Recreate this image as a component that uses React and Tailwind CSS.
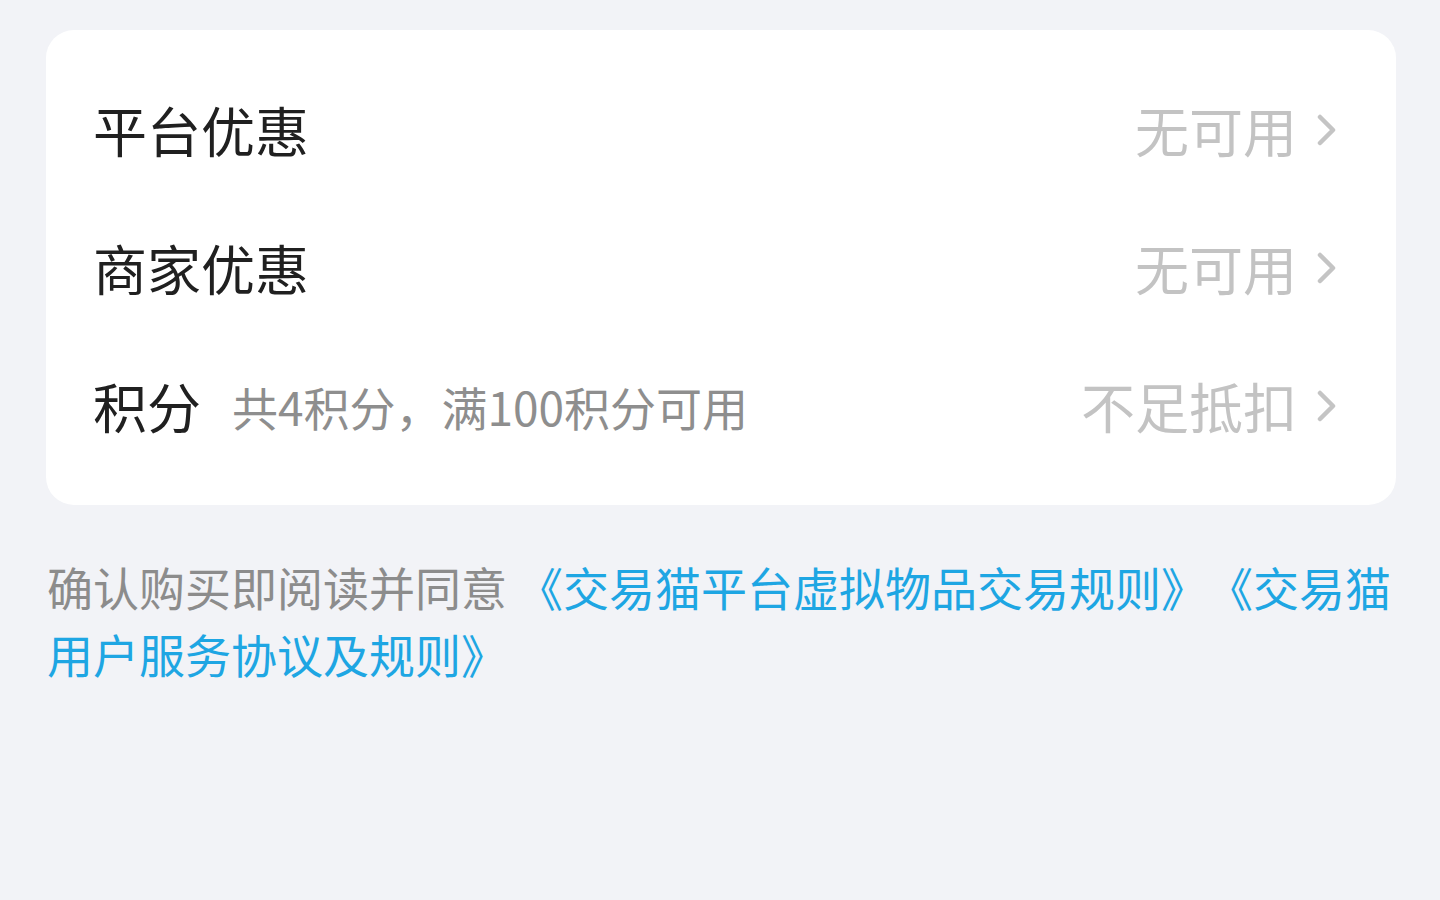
import React from "react";

const Chevron = () => (
  <svg width="22" height="32" viewBox="0 0 22 32" className="shrink-0">
    <path d="M4 3 L17 16 L4 29" fill="none" stroke="#c4c4c4" strokeWidth="4.5" strokeLinecap="round" strokeLinejoin="round" />
  </svg>
);

const Row = ({ label, sub, value }) => (
  <div className="flex items-center h-[138px]">
    <div className="text-[54px] text-[#202020] leading-none">{label}</div>
    {sub && <div className="ml-[31px] text-[46px] text-[#8e8e8e] leading-none">{sub}</div>}
    <div className="ml-auto flex items-center gap-[19px]">
      <div className="text-[54px] text-[#c3c3c3] leading-none">{value}</div>
      <Chevron />
    </div>
  </div>
);

export default function App() {
  return (
    <div
      className="w-[1440px] h-[900px] bg-[#f2f3f7] pt-[30px] pl-[46px] pr-[44px]"
      style={{ fontFamily: '"Noto Sans CJK SC", "Noto Sans", sans-serif' }}
    >
      <div className="bg-white rounded-[28px] pl-[47px] pr-[58px] pt-[31px] pb-[30px]">
        <Row label="平台优惠" value="无可用" />
        <Row label="商家优惠" value="无可用" />
        <Row label="积分" sub="共4积分，满100积分可用" value="不足抵扣" />
      </div>
      <div className="mt-[48px] pl-[1px] text-[46px] leading-[67px] text-[#8c8c8c] [text-spacing-trim:space-all]">
        确认购买即阅读并同意
        <span className="ml-[10px] text-[#1ea6e3]">《交易猫平台虚拟物品交易规则》</span>
        <span className="text-[#1ea6e3]">《交易猫用户服务协议及规则》</span>
      </div>
    </div>
  );
}
